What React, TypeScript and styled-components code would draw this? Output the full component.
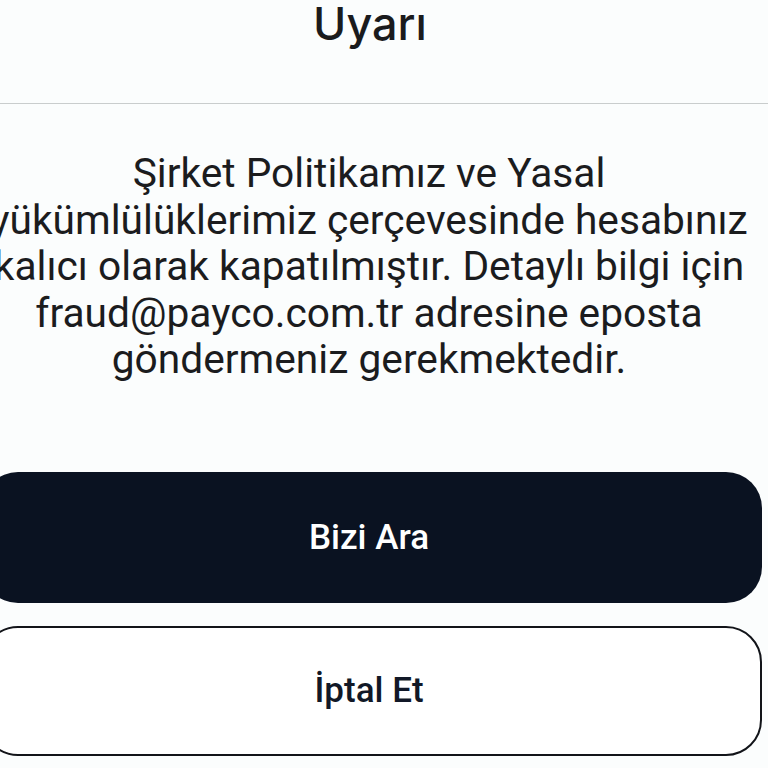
import styled, { createGlobalStyle } from "styled-components";

const GlobalStyle = createGlobalStyle`
  html, body {
    margin: 0;
    padding: 0;
    background: #fbfdfd;
    overflow: hidden;
  }
  * { box-sizing: border-box; }
`;

const Sheet = styled.div`
  width: 768px;
  height: 768px;
  display: flex;
  flex-direction: column;
  align-items: center;
  background: #fbfdfd;
  font-family: Roboto, "Liberation Sans", sans-serif;
  color: #1b1c1e;
`;

const Header = styled.header`
  width: 100%;
  display: flex;
  justify-content: center;
  padding-bottom: 55px;
  border-bottom: 1.5px solid #c9cdcd;
`;

const Title = styled.h1`
  margin: 0 0 0 -28px;
  font-family: Inter, "Noto Sans", sans-serif;
  font-weight: 500;
  font-size: 45px;
  line-height: 48px;
  color: #1a1b1d;
`;

const Message = styled.div`
  margin: 46px 0 0 -30px;
  display: flex;
  flex-direction: column;
  align-items: center;
  font-size: 40.7px;
  line-height: 46.5px;
  font-weight: 400;
`;

const Line = styled.span`
  white-space: nowrap;
`;

const Actions = styled.div`
  margin: 89px 0 0 -24px;
  width: 780px;
  display: flex;
  flex-direction: column;
  gap: 23px;
  flex-shrink: 0;
`;

const Button = styled.button<{ $variant: "solid" | "outline" }>`
  height: ${p => (p.$variant === "solid" ? "131px" : "130px")};
  border-radius: 36px;
  border: ${p => (p.$variant === "solid" ? "none" : "2.5px solid #121419")};
  background: ${p => (p.$variant === "solid" ? "#0a1221" : "#ffffff")};
  color: ${p => (p.$variant === "solid" ? "#ffffff" : "#111827")};
  font-family: Roboto, "Liberation Sans", sans-serif;
  font-weight: 500;
  font-size: 35px;
  padding: 0;
  display: flex;
  align-items: center;
  justify-content: center;
  text-indent: -6px;
`;

const lines = [
  "Şirket Politikamız ve Yasal",
  "yükümlülüklerimiz çerçevesinde hesabınız",
  "kalıcı olarak kapatılmıştır. Detaylı bilgi için",
  "fraud@payco.com.tr adresine eposta",
  "göndermeniz gerekmektedir.",
];

export default function App() {
  return (
    <>
      <GlobalStyle />
      <Sheet>
        <Header>
          <Title>Uyarı</Title>
        </Header>
        <Message>
          {lines.map(l => (
            <Line key={l}>{l}</Line>
          ))}
        </Message>
        <Actions>
          <Button $variant="solid">Bizi Ara</Button>
          <Button $variant="outline">İptal Et</Button>
        </Actions>
      </Sheet>
    </>
  );
}
